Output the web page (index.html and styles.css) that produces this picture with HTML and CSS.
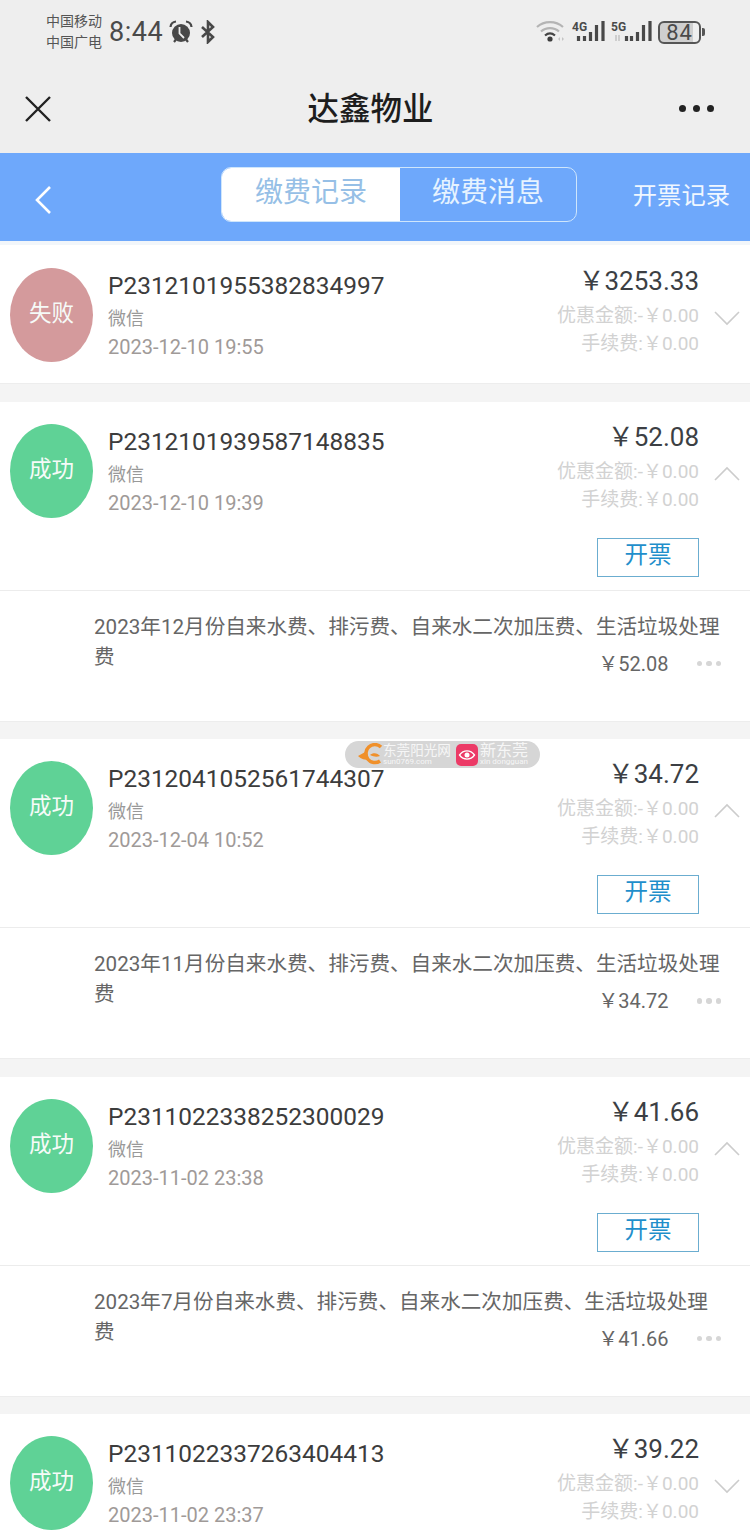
FILE: index.html
```html
<!DOCTYPE html>
<html lang="zh-CN">
<head>
    <meta charset="UTF-8">
    <meta name="viewport" content="width=device-width, initial-scale=1.0">
    <title>达鑫物业</title>
    <link rel="stylesheet" href="styles.css">
</head>
<body>
<div class="page">
    <div class="status-bar">
        <div class="carrier"><span>中国移动</span><span>中国广电</span></div>
        <span class="time">8:44</span>
        <svg class="alarm" width="24" height="24" viewBox="0 0 24 24">
            <circle cx="12" cy="13" r="9" fill="#484848"/>
            <path d="M10.500 7v6.500l4.500 4.500" fill="none" stroke="#eee" stroke-width="1.800"/>
            <path d="M1.500 7Q2 2 7 1.500M22.500 7Q22 2 17 1.500M5 22l2-2.500M19 22l-2-2.500" stroke="#484848" stroke-width="2.200" fill="none"/>
        </svg>
        <svg class="bt" width="16" height="24" viewBox="0 0 16 24">
            <path d="M2 7l11 10-5 5V2l5 5L2 17" fill="none" stroke="#484848" stroke-width="2.600"/>
        </svg>
        <div class="status-right">
            <svg class="wifi" width="30" height="24" viewBox="0 0 30 24">
                <path d="M1 7c7-6.500 19-6.500 26 0" fill="none" stroke="#b4b4b4" stroke-width="2.200"/>
                <path d="M5 11.500c5-4.500 13-4.500 18 0" fill="none" stroke="#b4b4b4" stroke-width="2.200"/>
                <path d="M9 15.500c3-2.500 7-2.500 10 0" fill="none" stroke="#444" stroke-width="2.200"/>
                <circle cx="14" cy="19" r="2.600" fill="#3c3c3c"/>
                <path d="M22 19l2-2v4zM28 19l-2-2v4z" fill="#c4c4c4"/>
            </svg>
            <div class="signal">
                <span class="net">4G</span>
                <svg width="33" height="24" viewBox="0 0 33 24">
                    <path d="M6.500 21v-5M12.500 21v-5M18.500 21v-9M24.500 21V5M31 21V1" stroke="#484848" stroke-width="3.200" fill="none"/>
                </svg>
            </div>
            <div class="signal">
                <span class="net">5G</span>
                <svg width="41" height="24" viewBox="0 0 41 24">
                    <path d="M5 21v-6M8 15v6" stroke="#c4c4c4" stroke-width="1.500" fill="none"/>
                    <path d="M15.500 21v-5M20.500 21v-5M26.500 21v-9M32.500 21V5M39 21V1" stroke="#484848" stroke-width="3.200" fill="none"/>
                </svg>
            </div>
            <div class="battery"><span class="battery-num">84</span></div>
            <span class="battery-nub"></span>
        </div>
    </div>

    <div class="nav-bar">
        <svg width="28" height="28" viewBox="0 0 28 28">
            <path d="M2 2l24 24M26 2L2 26" stroke="#222" stroke-width="2.400" fill="none"/>
        </svg>
        <h1 class="nav-title">达鑫物业</h1>
        <div class="more"><i></i><i></i><i></i></div>
    </div>

    <div class="tab-bar">
        <svg class="back" width="18" height="30" viewBox="0 0 18 30">
            <path d="M16 2L3 15l13 13" stroke="#fff" stroke-width="2.600" fill="none"/>
        </svg>
        <div class="tabs">
            <span class="tab tab-active">缴费记录</span>
            <span class="tab">缴费消息</span>
        </div>
        <span class="invoice-link">开票记录</span>
    </div>

    <div class="list">
        <div class="card card-first">
            <div class="card-head">
                <div class="avatar avatar-fail">失败</div>
                <div class="info">
                    <div class="order-no">P2312101955382834997</div>
                    <div class="pay-type">微信</div>
                    <div class="pay-time">2023-12-10 19:55</div>
                </div>
                <div class="money">
                    <div class="amount">￥3253.33</div>
                    <div class="sub">优惠金额:-￥0.00</div>
                    <div class="sub">手续费:￥0.00</div>
                </div>
                <svg class="arrow" width="26" height="16" viewBox="0 0 26 16"><path d="M1 2l12 12L25 2" stroke="#ccc" stroke-width="1.600" fill="none"/></svg>
            </div>
        </div>

        <div class="card">
            <div class="card-head">
                <div class="avatar avatar-ok">成功</div>
                <div class="info">
                    <div class="order-no">P2312101939587148835</div>
                    <div class="pay-type">微信</div>
                    <div class="pay-time">2023-12-10 19:39</div>
                </div>
                <div class="money">
                    <div class="amount">￥52.08</div>
                    <div class="sub">优惠金额:-￥0.00</div>
                    <div class="sub">手续费:￥0.00</div>
                    <div class="invoice-btn">开票</div>
                </div>
                <svg class="arrow" width="26" height="16" viewBox="0 0 26 16"><path d="M1 14L13 2l12 12" stroke="#ccc" stroke-width="1.600" fill="none"/></svg>
            </div>
            <div class="card-body">
                <div class="fee-name">2023年12月份自来水费、排污费、自来水二次加压费、生活垃圾处理</div>
                <div class="fee-row">
                    <span class="fee-name">费</span>
                    <span class="fee-price">￥52.08</span>
                    <span class="dots"><i></i><i></i><i></i></span>
                </div>
            </div>
        </div>

        <div class="card">
            <div class="card-head">
                <div class="avatar avatar-ok">成功</div>
                <div class="info">
                    <div class="order-no">P2312041052561744307</div>
                    <div class="pay-type">微信</div>
                    <div class="pay-time">2023-12-04 10:52</div>
                </div>
                <div class="money">
                    <div class="amount">￥34.72</div>
                    <div class="sub">优惠金额:-￥0.00</div>
                    <div class="sub">手续费:￥0.00</div>
                    <div class="invoice-btn">开票</div>
                </div>
                <svg class="arrow" width="26" height="16" viewBox="0 0 26 16"><path d="M1 14L13 2l12 12" stroke="#ccc" stroke-width="1.600" fill="none"/></svg>
            </div>
            <div class="card-body">
                <div class="fee-name">2023年11月份自来水费、排污费、自来水二次加压费、生活垃圾处理</div>
                <div class="fee-row">
                    <span class="fee-name">费</span>
                    <span class="fee-price">￥34.72</span>
                    <span class="dots"><i></i><i></i><i></i></span>
                </div>
            </div>
        </div>

        <div class="card">
            <div class="card-head">
                <div class="avatar avatar-ok">成功</div>
                <div class="info">
                    <div class="order-no">P2311022338252300029</div>
                    <div class="pay-type">微信</div>
                    <div class="pay-time">2023-11-02 23:38</div>
                </div>
                <div class="money">
                    <div class="amount">￥41.66</div>
                    <div class="sub">优惠金额:-￥0.00</div>
                    <div class="sub">手续费:￥0.00</div>
                    <div class="invoice-btn">开票</div>
                </div>
                <svg class="arrow" width="26" height="16" viewBox="0 0 26 16"><path d="M1 14L13 2l12 12" stroke="#ccc" stroke-width="1.600" fill="none"/></svg>
            </div>
            <div class="card-body">
                <div class="fee-name">2023年7月份自来水费、排污费、自来水二次加压费、生活垃圾处理</div>
                <div class="fee-row">
                    <span class="fee-name">费</span>
                    <span class="fee-price">￥41.66</span>
                    <span class="dots"><i></i><i></i><i></i></span>
                </div>
            </div>
        </div>

        <div class="card">
            <div class="card-head">
                <div class="avatar avatar-ok">成功</div>
                <div class="info">
                    <div class="order-no">P2311022337263404413</div>
                    <div class="pay-type">微信</div>
                    <div class="pay-time">2023-11-02 23:37</div>
                </div>
                <div class="money">
                    <div class="amount">￥39.22</div>
                    <div class="sub">优惠金额:-￥0.00</div>
                    <div class="sub">手续费:￥0.00</div>
                </div>
                <svg class="arrow" width="26" height="16" viewBox="0 0 26 16"><path d="M1 2l12 12L25 2" stroke="#ccc" stroke-width="1.600" fill="none"/></svg>
            </div>
        </div>
    </div>

    <div class="watermark">
        <svg width="25" height="23" viewBox="0 0 25 23">
            <path d="M23 4A9 9 0 1 0 22 18" fill="none" stroke="#f0902a" stroke-width="3.500"/>
            <path d="M0 13l9-5 2 9c-4 0-8-1-11-4zM12 12c3-3 8-2 10 1-3 1-6 1-10-1z" fill="#f0902a"/>
        </svg>
        <span class="wm-text">东莞阳光网<small>sun0769.com</small></span>
        <svg class="wm-eye" width="22" height="22" viewBox="0 0 22 22">
            <rect width="22" height="22" rx="5" fill="#ec3a66"/>
            <path d="M3.500 11c4-5.500 11-5.500 15 0-4 5.500-11 5.500-15 0z" fill="none" stroke="#fff" stroke-width="1.300"/>
            <circle cx="11" cy="11" r="2.500" fill="#fff"/>
        </svg>
        <span class="wm-text wm-text-2">新东莞<small>xin dongguan</small></span>
    </div>
</div>
</body>
</html>
```
FILE: styles.css
```css
* {
    box-sizing: border-box;
}
body {
    margin: 0;
    font-family: 'Roboto', 'Noto Sans CJK SC', sans-serif;
    background-color: #f4f4f4;
}
.page {
    position: relative;
    width: 750px;
    height: 1530px;
    overflow: hidden;
}

/* status bar */
.status-bar {
    display: flex;
    align-items: center;
    height: 64px;
    padding-left: 46px;
    background-color: #eeeeee;
    color: #4a4a4a;
}
.carrier {
    display: flex;
    flex-direction: column;
    font-size: 14px;
    line-height: 21px;
    color: #555;
}
.time {
    margin-left: 7px;
    font-size: 27px;
    letter-spacing: 0.5px;
}
.alarm {
    margin-left: 6px;
}
.bt {
    margin-left: 7px;
}
.status-right {
    display: flex;
    align-items: center;
    margin-left: auto;
    padding-right: 45px;
}
.signal {
    position: relative;
    margin-left: 6px;
    height: 24px;
}
.signal svg {
    display: block;
}
.net {
    position: absolute;
    left: 0;
    top: 1px;
    font-size: 12px;
    line-height: 12px;
    font-weight: 700;
    color: #4a4a4a;
}
.battery {
    width: 43px;
    height: 23px;
    margin-left: 6px;
    border: 2px solid #555;
    border-radius: 6px;
    background: linear-gradient(90deg, #cfcfcf 84%, #eee 84%);
    text-align: center;
}
.battery-num {
    display: block;
    font-size: 22px;
    line-height: 19px;
    letter-spacing: 1px;
}
.battery-nub {
    width: 3px;
    height: 8px;
    margin-left: 1px;
    background-color: #555;
    border-radius: 0 2px 2px 0;
}

/* nav */
.nav-bar {
    display: flex;
    align-items: center;
    justify-content: space-between;
    height: 89px;
    padding: 0 36px 0 24px;
    background-color: #eeeeee;
}
.nav-title {
    margin: 0 0 6px 10px;
    font-size: 31.5px;
    font-weight: 500;
    color: #1d1d1d;
}
.more {
    display: flex;
    gap: 7px;
}
.more i {
    width: 7px;
    height: 7px;
    border-radius: 50%;
    background-color: #222;
}

/* tabs */
.tab-bar {
    position: relative;
    display: flex;
    align-items: center;
    height: 88px;
    padding: 0 20px 6px 221px;
    background-color: #6ea8fb;
}
.back {
    position: absolute;
    left: 34px;
    top: 32px;
}
.tabs {
    display: flex;
    width: 356px;
    height: 55px;
    border: 1.5px solid #cfe6fb;
    border-radius: 10px;
    overflow: hidden;
}
.tab {
    flex: 1;
    padding-bottom: 2px;
    font-size: 28px;
    line-height: 50px;
    text-align: center;
    color: #e6f3ff;
}
.tab-active {
    flex: none;
    width: 178px;
    background-color: #fff;
    color: #96bfe6;
}
.invoice-link {
    margin: 0 0 2px auto;
    font-size: 24.3px;
    color: #f0f7ff;
}

/* record list */
.card {
    margin-bottom: 17.5px;
    background-color: #fff;
    border-bottom: 1px solid #ededed;
}
.card-first {
    padding-top: 1px;
    border-top: 4px solid #f2f6fa;
}
.card-head {
    display: flex;
    align-items: flex-start;
    padding: 20px 10px 0;
    min-height: 137px;
}
.avatar {
    flex: none;
    width: 83px;
    height: 94px;
    margin-top: 2px;
    border-radius: 50%;
    font-size: 22.5px;
    line-height: 90px;
    text-align: center;
    color: #f6fbf8;
}
.avatar-fail {
    background-color: #d49a9c;
}
.avatar-ok {
    background-color: #5fd296;
}
.info {
    flex: 1;
    margin: 6px 0 0 15px;
}
.order-no {
    font-size: 24.45px;
    line-height: 28px;
    margin-bottom: 5px;
    color: #3c3c3c;
    white-space: nowrap;
}
.pay-type {
    font-size: 18px;
    line-height: 28px;
    color: #999;
}
.pay-time {
    font-size: 20px;
    line-height: 28px;
    color: #a09a98;
}
.money {
    flex: none;
    display: flex;
    flex-direction: column;
    align-items: flex-end;
}
.amount {
    font-size: 26px;
    line-height: 30px;
    margin-bottom: 6px;
    color: #3c3f44;
}
.sub {
    font-size: 19px;
    line-height: 28px;
    color: #d2d2d2;
}
.arrow {
    flex: none;
    margin: 44px 0 0 15px;
}
.invoice-btn {
    width: 102px;
    height: 39px;
    margin: 24px 0 13px;
    border: 1.5px solid #6badd0;
    font-size: 23.5px;
    line-height: 33px;
    text-align: center;
    color: #1f8fcb;
}
.card-body {
    height: 131px;
    padding: 21px 29px 0 94px;
    border-top: 1px solid #ececec;
}
.fee-name {
    font-size: 20.6px;
    line-height: 30px;
    color: #666;
    white-space: nowrap;
}
.fee-row {
    display: flex;
    align-items: flex-start;
}
.fee-price {
    margin: 7px 0 0 auto;
    font-size: 20px;
    line-height: 30px;
    color: #666;
}
.dots {
    display: flex;
    gap: 4px;
    margin: 19px 0 0 28px;
}
.dots i {
    width: 5.5px;
    height: 5.5px;
    border-radius: 50%;
    background-color: #d6d6d6;
}

/* site watermark, sits over the list */
.watermark {
    position: absolute;
    left: 345px;
    top: 741px;
    display: flex;
    align-items: center;
    width: 195px;
    height: 27px;
    padding-left: 13px;
    border-radius: 14px;
    background-color: #d6d6d6;
}
.wm-text {
    display: flex;
    flex-direction: column;
    width: 68px;
    font-size: 13.6px;
    line-height: 15px;
    color: #f6f6f6;
    white-space: nowrap;
}
.wm-text small {
    font-size: 8px;
    line-height: 8px;
}
.wm-text-2 {
    width: 50px;
    margin-left: 2px;
    font-size: 16px;
}
.wm-eye {
    margin-left: 5px;
}
```
